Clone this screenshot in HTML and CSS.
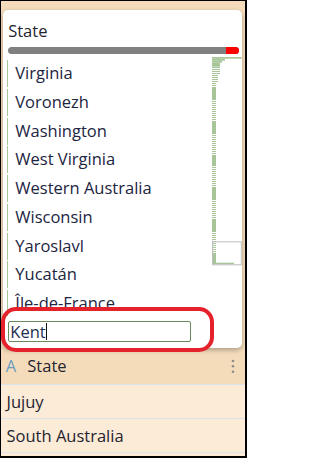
FILE: index.html
```html
<!DOCTYPE html>
<html>
<head>
<meta charset="utf-8">
<link rel="stylesheet" href="styles.css">
</head>
<body>
<div class="frame">
  <div class="upper">
    <div class="card">
      <div class="title">State</div>
      <div class="hbar"><div class="hbar-end"></div></div>
      <div class="body">
        <div class="list">
          <div class="item"><div class="seg">Virginia</div></div>
          <div class="item"><div class="seg">Voronezh</div></div>
          <div class="item"><div class="seg">Washington</div></div>
          <div class="item"><div class="seg">West Virginia</div></div>
          <div class="item"><div class="seg">Western Australia</div></div>
          <div class="item"><div class="seg">Wisconsin</div></div>
          <div class="item"><div class="seg">Yaroslavl</div></div>
          <div class="item"><div class="seg">Yucatán</div></div>
          <div class="item"><div class="seg">Île-de-France</div></div>
        </div>
        <svg class="minimap" width="30" height="209" viewBox="0 0 30 209">
          <defs>
            <pattern id="st" width="30" height="2" patternUnits="userSpaceOnUse">
              <rect x="0" y="0" width="30" height="1" fill="#a7c598"/>
            </pattern>
          </defs>
          <g fill="#a7c598">
            <rect x="0" y="0" width="29.7" height="1.7"/>
            <rect x="0" y="1.7" width="13" height="2"/>
            <rect x="0" y="3.7" width="10" height="2"/>
            <rect x="0" y="5.7" width="8" height="4"/>
            <rect x="0" y="10" width="8" height="8" fill="url(#st)"/>
            <rect x="0" y="18" width="6" height="8" fill="url(#st)"/>
            <rect x="0" y="26" width="4" height="5" fill="url(#st)"/>
            <rect x="0" y="31" width="4" height="12"/>
            <rect x="0" y="44" width="4" height="20" fill="url(#st)"/>
            <rect x="0" y="64" width="4" height="12"/>
            <rect x="0" y="76" width="4" height="22" fill="url(#st)"/>
            <rect x="0" y="98" width="4" height="11"/>
            <rect x="0" y="110" width="4" height="20" fill="url(#st)"/>
            <rect x="0" y="130" width="4" height="12"/>
            <rect x="0" y="142" width="4" height="21" fill="url(#st)"/>
            <rect x="0" y="163" width="4" height="12"/>
            <rect x="0" y="176" width="4" height="20" fill="url(#st)"/>
            <rect x="0" y="196" width="4" height="10"/>
            <rect x="0" y="205.7" width="22" height="1.6"/>
          </g>
          <rect x="0.5" y="184.8" width="28.8" height="23" fill="none" stroke="#bdbdbd" stroke-width="1"/>
        </svg>
      </div>
      <div class="search"><span class="search-text">Kent</span><span class="caret"></span></div>
    </div>
    <div class="header">
      <span class="type-icon">A</span>
      <span class="header-label">State</span>
      <svg class="kebab" width="4" height="16" viewBox="0 0 4 16">
        <circle cx="2" cy="2" r="1.3" fill="#8c8c8c"/>
        <circle cx="2" cy="7.3" r="1.3" fill="#8c8c8c"/>
        <circle cx="2" cy="12.8" r="1.3" fill="#8c8c8c"/>
      </svg>
    </div>
  </div>
  <div class="row">Jujuy</div>
  <div class="row">South Australia</div>
  <div class="highlight"></div>
</div>
</body>
</html>
```
FILE: styles.css
```css
html, body {
  margin: 0;
  padding: 0;
}
body {
  width: 247px;
  height: 458px;
  font-family: "Open Sans", "Liberation Sans", sans-serif;
  font-size: 16.5px;
}
.frame {
  position: relative;
  box-sizing: border-box;
  width: 247px;
  height: 458px;
  border-style: solid;
  border-color: #000;
  border-width: 1px 2px 2px 1px;
  background: #fcebd7;
  overflow: hidden;
}
.upper {
  background: #f4dcbb;
  padding: 9px 3.3px 0 1.7px;
}
.card {
  background: #fff;
  border-radius: 5px;
  box-shadow: 0 2px 5px rgba(0, 0, 0, 0.3);
  padding: 0 0 6px 0;
  position: relative;
  z-index: 1;
}
.title {
  padding: 10.5px 0 0 5.5px;
  line-height: 20px;
  color: #1f2430;
}
.hbar {
  margin: 6.5px 3px 0 5px;
  height: 7px;
  border-radius: 3.5px;
  background: #808080;
  display: flex;
  justify-content: flex-end;
  overflow: hidden;
}
.hbar-end {
  width: 13px;
  height: 100%;
  background: #ff0000;
}
.body {
  margin-top: 3px;
  height: 259px;
  display: flex;
  overflow: hidden;
}
.list {
  flex: 1;
  padding-top: 1.25px;
  padding-left: 4.6px;
  min-width: 0;
}
.item {
  height: 28.75px;
  box-sizing: border-box;
  padding-top: 1.75px;
}
.seg {
  height: 27px;
  border-left: 1.5px solid #a7c598;
  padding-left: 7px;
  line-height: 25px;
  color: #1c2541;
  white-space: nowrap;
}
.minimap {
  display: block;
  flex: none;
  width: 30px;
  height: 209px;
}
.search {
  margin: 5px 0 0 5.6px;
  width: 182.4px;
  height: 21.3px;
  box-sizing: border-box;
  border: 1px solid #6b8a5b;
  border-radius: 2px;
  display: flex;
  align-items: center;
  padding-left: 1px;
  color: #1e3050;
  line-height: 19px;
}
.caret {
  display: inline-block;
  width: 0;
  height: 17px;
  border-left: 1px solid #111;
  margin-left: 0.5px;
}
.header {
  height: 35.7px;
  display: flex;
  align-items: center;
  padding-left: 4.8px;
  border-bottom: 1px solid #dbe2e9;
  margin: 0 -3.3px 0 -1.7px;
  color: #1f2430;
}
.type-icon {
  color: #6b9cc2;
  width: 21.5px;
  line-height: 20px;
}
.header-label {
  flex: 1;
  line-height: 20px;
}
.kebab {
  display: block;
  margin-right: 10.5px;
  margin-top: 1px;
}
.row {
  height: 33px;
  line-height: 33px;
  padding-left: 5.5px;
  border-bottom: 1px solid #dbe2e9;
  color: #1f2430;
}
.highlight {
  position: absolute;
  left: 0;
  top: 306.3px;
  width: 213px;
  height: 44.5px;
  box-sizing: border-box;
  border: 4.3px solid #e5212b;
  border-radius: 15px;
  z-index: 2;
}
```
